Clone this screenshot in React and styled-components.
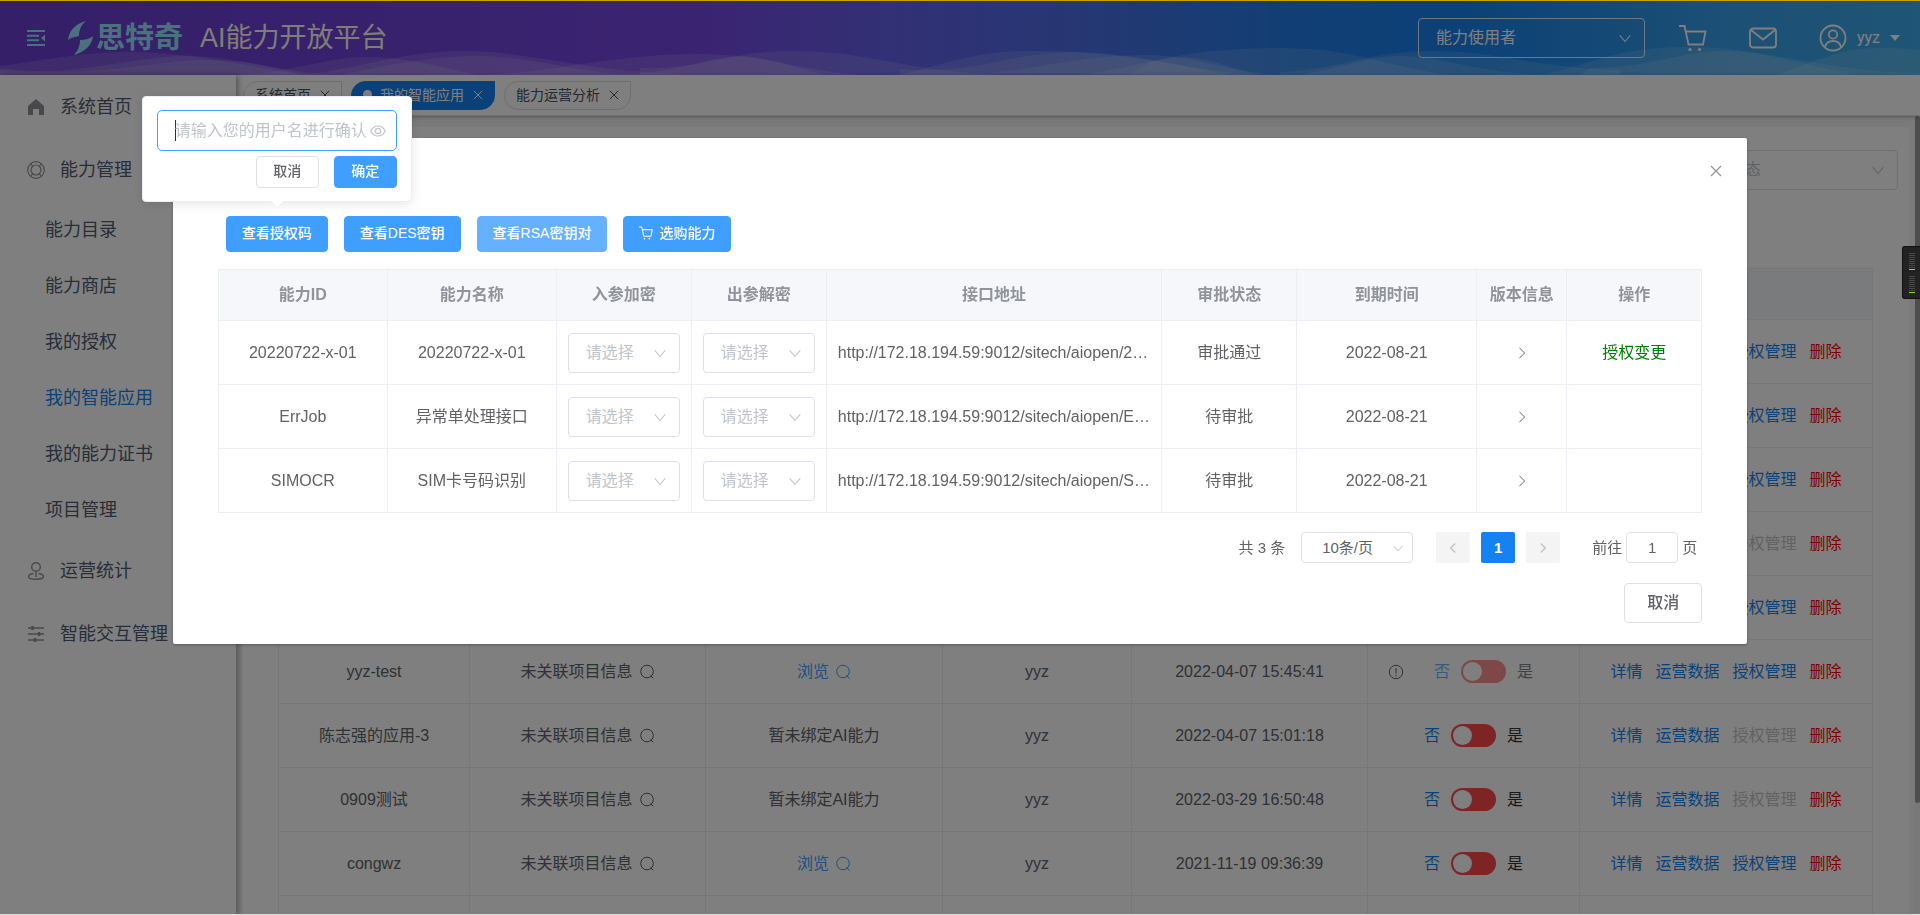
import React from 'react';
import styled, { createGlobalStyle, css } from 'styled-components';

const GlobalStyle = createGlobalStyle`
    * {
        box-sizing: border-box;
    }
    body {
        margin: 0;
        font-family: "Liberation Sans", "Noto Sans CJK SC", sans-serif;
        font-size: 16px;
        line-height: 24px;
        color: #606266;
    }
    button, input, select {
        font-family: inherit;
        line-height: inherit;
        margin: 0;
    }
    svg {
        display: block;
        flex: none;
    }
`

/* ---------- icons ---------- */

const Icon = ({ size = 16, width, height, box = '0 0 16 16', children, stroke = 1 }) => (
    <svg width={width || size} height={height || size} viewBox={box} fill="none" stroke="currentColor" strokeWidth={stroke} aria-hidden="true">
        {children}
    </svg>
)

const ChevronDown = ({ size = 14 }) => (
    <Icon size={size} stroke={1.3}><path d="M2 5l6 7l6-7" /></Icon>
)

const ChevronRight = ({ size = 14, stroke = 1.1 }) => (
    <Icon size={size} stroke={stroke}><path d="M5 2l6 6-6 6" /></Icon>
)

const ChevronLeft = ({ size = 14, stroke }) => (
    <Icon size={size} stroke={stroke}><path d="M11 2L5 8l6 6" /></Icon>
)

const CloseIcon = ({ size = 12 }) => (
    <Icon size={size} box="0 0 12 12" stroke={1.2}><path d="M1 1l10 10M11 1L1 11" /></Icon>
)

const SearchIcon = () => (
    <Icon size={16}><circle cx="8" cy="7.500" r="6.300" /><path d="M11.500 11.500l3 3" /></Icon>
)

const WarnIcon = () => (
    <Icon size={16}><circle cx="8" cy="8" r="6.700" /><path d="M8 4v5.500M8 10.800v1.400" /></Icon>
)

const EyeIcon = () => (
    <Icon size={16} stroke={1.200}>
        <path d="M.7 8C2.500 4.500 5 3 8 3s5.500 1.500 7.300 5c-1.800 3.500-4.300 5-7.300 5S2.500 11.500.7 8z" />
        <circle cx="8" cy="8" r="2.700" />
    </Icon>
)

const FoldIcon = () => (
    <Icon width={18} height={16} box="0 0 18 16" stroke={2}>
        <path d="M0 1h18M0 5.700h12M0 10.300h12M0 15h18" />
        <path d="M18 4.500v7L14 8z" fill="currentColor" stroke="none" />
    </Icon>
)

const CartIcon = ({ size = 28, stroke = 1.800 }) => (
    <Icon size={size} box="0 0 28 28" stroke={stroke}>
        <path d="M0 2h5.500l4 18.500H24L26.500 7.500H6.500" />
        <circle cx="11" cy="25.500" r="1.600" fill="currentColor" stroke="none" />
        <circle cx="20.500" cy="25.500" r="1.600" fill="currentColor" stroke="none" />
    </Icon>
)

const MailIcon = () => (
    <Icon size={28} box="0 0 28 28" stroke={1.800}>
        <rect x="1" y="4.500" width="26" height="19" rx="3" />
        <path d="M2 6l12 9.500L26 6" />
    </Icon>
)

const UserIcon = () => (
    <Icon size={28} box="0 0 28 28" stroke={1.800}>
        <circle cx="14" cy="14" r="12.500" />
        <circle cx="14" cy="10.500" r="4.200" />
        <path d="M6 23c1-4 4-6 8-6s7 2 8 6" />
    </Icon>
)

const LogoMark = () => (
    <svg width="25" height="34" viewBox="0 0 25 34" fill="currentColor" aria-hidden="true">
        <path d="M18 0C9 2 1 9 0 19C4 16 7 16 11 15C11 9 13 4 18 0z" />
        <path d="M25 15C24 24 17 31 6 34C10 29 12 25 12 19C17 19 21 18 25 15z" />
    </svg>
)

const HomeIcon = () => (
    <Icon size={18} box="0 0 18 18">
        <path d="M9 1l8 7v9h-5v-6H6v6H1V8z" fill="currentColor" stroke="none" />
    </Icon>
)

const RingIcon = () => (
    <Icon size={18} box="0 0 18 18" stroke={1.2}>
        <circle cx="9" cy="9" r="8.300" />
        <circle cx="9" cy="9" r="5" />
        <path d="M4 3l2 3M14 3l-2 3M4 15l2-3M14 15l-2-3" />
    </Icon>
)

const StatIcon = () => (
    <Icon size={18} box="0 0 18 18" stroke={1.400}>
        <circle cx="9" cy="5" r="4.300" />
        <path d="M9 9.300V15M6.500 11.500C3.500 12 1.500 13 1.500 14.500S4.500 17.300 9 17.300s7.500-1.300 7.500-2.800-2-2.500-5-3" />
    </Icon>
)

const TuneIcon = () => (
    <Icon size={18} box="0 0 18 18" stroke={1.400}>
        <path d="M1 3h16M1 9h16M1 15h16" />
        <path d="M5.500 1v4M12 7v4M8 13v4" strokeWidth="2.500" />
    </Icon>
)

/* ---------- shell ---------- */

const Shell = styled.div`
    height: 100vh;
    display: flex;
    flex-direction: column;
    overflow: hidden;
    background-color: #fff;
`

const Header = styled.header`
    position: relative;
    flex: none;
    height: 75px;
    display: flex;
    align-items: center;
    padding: 0 20px 0 27px;
    color: #fff;
    background: linear-gradient(90deg, #683ed0 0%, #7647e2 36%, #6660ec 46%, #4a70e6 57%, #247eea 67%, #1682ee 76%, #38a0ea 90%, #3eaaec 100%);
    > * {
        position: relative;
    }
`

const WaveLayer = styled.svg`
    && {
        position: absolute;
        left: 0;
        bottom: 0;
        width: 100%;
        height: 75px;
    }
`

const FoldButton = styled.button`
    border: 0;
    padding: 0;
    background: none;
    color: #94e4fa;
`

const Brand = styled.div`
    display: flex;
    align-items: center;
    gap: 3px;
    margin-left: 23px;
    color: #94e4fa;
    font-size: 29px;
    line-height: 34px;
    font-weight: 700;
`

const Title = styled.h1`
    margin: 0 0 0 17px;
    flex: 1;
    font-size: 27px;
    line-height: 34px;
    font-weight: 400;
    color: #fffaf0;
`

const HeaderActions = styled.div`
    display: flex;
    align-items: center;
    gap: 42px;
    margin-left: 34px;
`

const IconButton = styled.button`
    border: 0;
    padding: 0;
    background: none;
    color: inherit;
`

const UserButton = styled(IconButton)`
    display: flex;
    align-items: center;
    gap: 10px;
    font-family: Roboto, sans-serif;
    font-size: 16px;
`

const Caret = styled.span`
    border: 5px solid transparent;
    border-top: 6px solid currentColor;
    border-bottom: 0;
`

const Body = styled.div`
    flex: 1;
    min-height: 0;
    display: flex;
`

const Sidebar = styled.nav`
    position: relative;
    z-index: 1;
    flex: none;
    width: 236px;
    background-color: #fff;
    box-shadow: 2px 0 6px rgba(0,0,0,0.35);
`

const MenuItem = styled.a`
    display: flex;
    align-items: center;
    gap: 15px;
    height: 63px;
    padding-left: 27px;
    font-size: 18px;
    color: #515a6e;
    text-decoration: none;
    white-space: nowrap;
    svg {
        color: #909399;
    }
`

const SubMenu = styled.div`
    padding: 1px 0;
`

const SubItem = styled(MenuItem)`
    height: 56px;
    padding-left: 45px;
    color: ${props => props.$active ? '#1482f0' : '#515a6e'};
`

const Main = styled.main`
    flex: 1;
    min-width: 0;
    display: flex;
    flex-direction: column;
    background-color: #f4f4f7;
`

const TabsBar = styled.div`
    position: relative;
    flex: none;
    height: 41px;
    display: flex;
    gap: 9px;
    padding: 6px 7px;
    background-color: #fff;
    border-bottom: 1px solid #d8dce5;
    box-shadow: 0 1px 4px rgba(0,0,0,0.3);
`

const Tab = styled.div`
    height: 29px;
    display: flex;
    align-items: center;
    padding: 0 11px 2px;
    font-size: 14px;
    border: 1px solid #d8dce5;
    border-radius: 15px 0 15px 15px;
    color: #495060;
    ${props => props.$active && css`
        color: #fff;
        background-color: #1482f0;
        border-color: #1482f0;
    `}
`

const TabDot = styled.span`
    width: 9px;
    height: 9px;
    margin-right: 8px;
    border-radius: 50%;
    background-color: #fff;
`

const TabClose = styled(IconButton)`
    margin-left: 9px;
`

const Scroller = styled.div`
    flex: 1;
    min-height: 0;
    display: flex;
`

const Content = styled.div`
    flex: 1;
    min-width: 0;
    overflow: hidden;
    padding: 11px 6px;
`

const ScrollTrack = styled.div`
    width: 5px;
    background-color: #f1f1f1;
`

const ScrollThumb = styled.div`
    height: 86%;
    border-radius: 3px;
    background-color: #9a9a9a;
`

const Card = styled.section`
    padding: 23px 11px 23px 12px;
    background-color: #fff;
    border-radius: 4px;
`

const FilterRow = styled.div`
    display: flex;
    justify-content: flex-end;
    margin-bottom: 78px;
`

/* ---------- form parts ---------- */

const SelectBox = styled.div`
    position: relative;
    display: flex;
    align-items: center;
    width: ${props => props.$width || '100%'};
    height: ${props => props.$small ? '31px' : '40px'};
    border: 1px solid ${props => props.$onDark ? 'rgba(255,255,255,0.85)' : '#dcdfe6'};
    border-radius: 4px;
    background-color: ${props => props.$onDark ? 'transparent' : '#fff'};
    color: ${props => props.$onDark ? '#fff' : '#c0c4cc'};
    select {
        width: 100%;
        height: 100%;
        padding: 0 17px;
        border: 0;
        outline: 0;
        appearance: none;
        background: transparent;
        color: ${props => props.$filled ? '#606266' : 'inherit'};
        font-size: ${props => props.$small ? '15px' : '16px'};
        ${props => props.$small && 'padding: 0 20px;'}
    }
    svg {
        position: absolute;
        right: ${props => props.$small ? '8px' : '12px'};
        pointer-events: none;
    }
`

const SelectField = ({ label, value, ...rest }) => (
    <SelectBox {...rest}>
        <select aria-label={label} defaultValue={value}>
            <option value={value}>{value}</option>
        </select>
        <ChevronDown size={rest.$small ? 12 : 14} />
    </SelectBox>
)

const Button = styled.button`
    display: flex;
    align-items: center;
    justify-content: center;
    gap: 6px;
    height: ${props => props.$height || 36}px;
    padding: 0 15px 2px;
    border: 1px solid ${props => props.$primary ? '#409eff' : '#dcdfe6'};
    border-radius: 4px;
    background-color: ${props => props.$primary ? '#409eff' : '#fff'};
    color: ${props => props.$primary ? '#fff' : '#606266'};
    font-size: ${props => props.$large ? 16 : 14}px;
    font-weight: 500;
    white-space: nowrap;
    ${props => props.$large && 'padding: 0 22px;'}
    ${props => props.$hover && css`
        background-color: #66b1ff;
        border-color: #66b1ff;
    `}
`

/* ---------- tables ---------- */

const Table = styled.table`
    width: 100%;
    table-layout: fixed;
    border-collapse: collapse;
    text-align: center;
    th, td {
        border: 1px solid #ebeef5;
        padding: 0 11px;
        white-space: nowrap;
        overflow: hidden;
        text-overflow: ellipsis;
    }
    th {
        height: 51px;
        padding: 0;
        background-color: #f5f7fa;
        color: #909399;
        font-weight: 700;
    }
    td {
        height: 64px;
    }
    td.url {
        padding-right: 9px;
        text-align: left;
    }
`

const AppTableWrap = styled.div`
    margin: 0 25px 0 24px;
`

const CellGroup = styled.div`
    display: flex;
    align-items: center;
    justify-content: center;
    gap: ${props => props.$gap || 6}px;
`

const Link = styled.a`
    text-decoration: none;
    color: ${props => props.$color || '#1482f0'};
`

const SwitchCell = styled.div`
    display: flex;
    align-items: center;
    justify-content: center;
    padding-right: ${props => props.$locked ? 26 : 0}px;
`

const SwitchLabel = styled.label`
    display: flex;
    align-items: center;
    gap: 11px;
    color: #303133;
    opacity: ${props => props.$disabled ? 0.6 : 1};
    span:first-child {
        color: #1482f0;
    }
    input {
        appearance: none;
        width: 45px;
        height: 23px;
        margin: 0;
        padding: 2px;
        border-radius: 12px;
        background-color: #ff4949;
    }
    input::before {
        content: "";
        display: block;
        width: 19px;
        height: 19px;
        border-radius: 50%;
        background-color: #fff;
    }
`

const WarnSlot = styled.span`
    display: flex;
    width: 46px;
`

/* ---------- dialog ---------- */

const Overlay = styled.div`
    position: fixed;
    inset: 0;
    z-index: 10;
    overflow: hidden;
    background-color: rgba(0,0,0,0.5);
    border-top: 1px solid #c9a100;
    border-bottom: 1px solid #dcdcdc;
`

const Dialog = styled.div`
    width: 82%;
    margin: 15vh auto 0;
    background-color: #fff;
    border-radius: 2px;
    box-shadow: 0 1px 3px rgba(0,0,0,0.3);
`

const DialogHeader = styled.div`
    display: flex;
    justify-content: flex-end;
    padding: 22px 20px 34px;
`

const DialogClose = styled(IconButton)`
    display: flex;
    align-items: center;
    justify-content: center;
    width: 22px;
    height: 22px;
    color: #909399;
`

const DialogBody = styled.div`
    padding: 0 45px 21px;
`

const Toolbar = styled.div`
    display: flex;
    gap: 16px;
    margin: 0 8px 17px;
`

const DialogFooter = styled.div`
    display: flex;
    justify-content: flex-end;
    margin-top: 20px;
`

const Pager = styled.div`
    display: flex;
    align-items: center;
    justify-content: flex-end;
    margin-top: 19px;
    padding-right: 5px;
    font-size: 15px;
`

const PageButtons = styled.div`
    display: flex;
    gap: 11px;
    margin: 0 32px 0 23px;
`

const PageButton = styled.button`
    display: flex;
    align-items: center;
    justify-content: center;
    width: 34px;
    height: 31px;
    padding: 0;
    border: 0;
    border-radius: 2px;
    font-size: 15px;
    font-weight: 700;
    background-color: ${props => props.$active ? '#1482f0' : '#f4f4f5'};
    color: ${props => props.$active ? '#fff' : '#c0c4cc'};
`

const Total = styled.span`
    margin-right: 16px;
`

const Jump = styled.label`
    display: flex;
    align-items: center;
    gap: 4px;
    input {
        width: 52px;
        height: 31px;
        border: 1px solid #dcdfe6;
        border-radius: 4px;
        text-align: center;
        font-size: 15px;
        color: #606266;
    }
`

const PopAnchor = styled.div`
    position: relative;
`

const Popover = styled.div`
    position: absolute;
    z-index: 20;
    left: 50%;
    bottom: calc(100% + 14px);
    transform: translateX(-50%);
    width: 270px;
    padding: 13px 14px;
    background-color: #fff;
    border: 1px solid #ebeef5;
    border-radius: 4px;
    box-shadow: 0 2px 12px rgba(0,0,0,0.1);
    &::after {
        content: "";
        position: absolute;
        left: 50%;
        top: 100%;
        margin-left: -6px;
        border: 6px solid transparent;
        border-top-color: #fff;
        border-bottom: 0;
    }
`

const ConfirmField = styled.div`
    display: flex;
    align-items: center;
    height: 41px;
    padding: 0 10px 0 17px;
    border: 1px solid #409eff;
    border-radius: 5px;
    color: #c0c4cc;
    input {
        flex: 1;
        min-width: 0;
        padding: 0;
        margin-right: 3px;
        border: 0;
        outline: 0;
        background: transparent;
        font-size: 16px;
        color: #606266;
    }
    input::placeholder {
        color: #c0c4cc;
    }
`

const TextCursor = styled.span`
    width: 1px;
    height: 21px;
    margin-right: -1px;
    background-color: #303133;
`

const PopActions = styled.div`
    display: flex;
    justify-content: flex-end;
    gap: 15px;
    margin-top: 5px;
    button {
        width: 63px;
    }
`

/* floating level meter on the right edge of the window */
const Meter = styled.div`
    position: fixed;
    right: 0;
    top: 246px;
    z-index: 30;
    display: flex;
    flex-direction: column;
    justify-content: center;
    gap: 6px;
    width: 18px;
    height: 53px;
    padding-left: 6px;
    background-color: #222;
    border: 1px solid #111;
    border-right: 0;
    border-radius: 3px 0 0 3px;
`

const MeterBars = styled.div`
    width: 6px;
    height: 17px;
    background: repeating-linear-gradient(#484848 0 1px, transparent 1px 2px);
    border-bottom: 1px solid ${props => props.$color};
`

/* ---------- data ---------- */

const waves = [
    'M0 66C40 61 80 52 130 52C190 52 240 66 310 75H0z',
    'M0 70C70 76 110 62 175 56C225 54 260 68 330 75H0z',
    'M0 68C50 74 100 72 140 66C190 58 240 55 300 75H0z',
    'M245 75C300 70 330 57 365 57C410 57 440 68 481 75z',
    'M300 75C350 71 400 51 465 51C530 51 580 72 700 75z',
    'M340 75C400 62 440 56 480 56C540 57 580 74 640 75z',
    'M480 75C560 72 610 54 700 54C760 54 800 70 860 75z',
    'M600 75C670 76 710 56 742 56C775 58 800 70 827 75z',
    'M640 68C700 70 730 51 790 51C870 51 900 70 1000 75H640z',
    'M900 75C940 66 970 51 1035 51C1120 51 1170 64 1230 75z',
    'M900 69C970 76 1010 53 1070 52C1140 52 1180 70 1260 75H900z',
    'M990 73C1040 69 1080 55 1150 55C1200 56 1230 75 1300 75z',
    'M1080 75C1130 68 1160 57 1185 57C1215 59 1235 70 1260 75z',
    'M1150 62C1190 52 1230 48 1285 48C1360 49 1390 68 1450 75H1130z',
    'M1280 72C1340 70 1370 51 1430 51C1500 51 1540 69 1620 70V75H1280z',
    'M1300 75C1350 66 1370 56 1400 56C1450 57 1480 75 1560 75z',
    'M1540 75C1590 66 1610 47 1690 47C1760 47 1800 66 1860 75z',
    'M1590 68C1650 68 1680 51 1725 51C1790 53 1830 72 1920 73V75H1580z',
    'M1775 75C1810 66 1830 48 1880 48C1900 48 1910 49 1920 50V75z',
]

const subMenu = ['能力目录', '能力商店', '我的授权', '我的智能应用', '我的能力证书', '项目管理']

const apps = [
    { id: 1, grant: true },
    { id: 2, grant: true },
    { id: 3, grant: true },
    { id: 4, grant: false },
    { id: 5, grant: true },
    { id: 6, name: 'yyz-test', bound: true, time: '2022-04-07 15:45:41', grant: true, locked: true },
    { id: 7, name: '陈志强的应用-3', bound: false, time: '2022-04-07 15:01:18', grant: false },
    { id: 8, name: '0909测试', bound: false, time: '2022-03-29 16:50:48', grant: false },
    { id: 9, name: 'congwz', bound: true, time: '2021-11-19 09:36:39', grant: true },
    { id: 10 },
]

const abilities = [
    { id: '20220722-x-01', name: '20220722-x-01', status: '审批通过', change: true },
    { id: 'ErrJob', name: '异常单处理接口', status: '待审批' },
    { id: 'SIMOCR', name: 'SIM卡号码识别', status: '待审批' },
]

const abilityHeads = ['能力ID', '能力名称', '入参加密', '出参解密', '接口地址', '审批状态', '到期时间', '版本信息', '操作']
const abilityCols = [169, 169, 135, 135, undefined, 135, 180, 90, 135]
const appCols = [191, 236, 237, 189, 236, 212, undefined]

/* ---------- parts ---------- */

const Cols = ({ widths }) => (
    <colgroup>
        {widths.map((width, index) => <col key={index} width={width} />)}
    </colgroup>
)

const TopBar = () => {
    return (
        <Header>
            <WaveLayer viewBox="0 0 1920 75" preserveAspectRatio="none" aria-hidden="true">
                {waves.map(d => <path key={d} d={d} fill="#fff" fillOpacity="0.13" />)}
            </WaveLayer>
            <FoldButton aria-label="收起菜单"><FoldIcon /></FoldButton>
            <Brand><LogoMark />思特奇</Brand>
            <Title>AI能力开放平台</Title>
            <SelectField label="角色" value="能力使用者" $width="227px" $onDark />
            <HeaderActions>
                <IconButton aria-label="购物车"><CartIcon /></IconButton>
                <IconButton aria-label="消息"><MailIcon /></IconButton>
                <UserButton><UserIcon />yyz<Caret /></UserButton>
            </HeaderActions>
        </Header>
    )
}

const SideMenu = () => {
    return (
        <Sidebar>
            <MenuItem href="#home"><HomeIcon />系统首页</MenuItem>
            <MenuItem href="#ability"><RingIcon />能力管理</MenuItem>
            <SubMenu>
                {subMenu.map(name => (
                    <SubItem key={name} href="#sub" $active={name === '我的智能应用'}>{name}</SubItem>
                ))}
            </SubMenu>
            <MenuItem href="#stat"><StatIcon />运营统计</MenuItem>
            <MenuItem href="#chat"><TuneIcon />智能交互管理</MenuItem>
        </Sidebar>
    )
}

const PageTab = ({ name, active }) => (
    <Tab $active={active}>
        {active && <TabDot />}
        {name}
        <TabClose aria-label="关闭"><CloseIcon size={10} /></TabClose>
    </Tab>
)

const AppRow = ({ app }) => {
    return (
        <tr>
            <td>{app.name}</td>
            <td>{app.name && <CellGroup>未关联项目信息<SearchIcon /></CellGroup>}</td>
            <td>
                {app.bound && (
                    <Link href="#view" $color="#409eff">
                        <CellGroup>浏览<SearchIcon /></CellGroup>
                    </Link>
                )}
                {app.bound === false && '暂未绑定AI能力'}
            </td>
            <td>{app.name && 'yyz'}</td>
            <td>{app.time}</td>
            <td>
                {app.name && (
                    <SwitchCell $locked={app.locked}>
                        {app.locked && <WarnSlot><WarnIcon /></WarnSlot>}
                        <SwitchLabel $disabled={app.locked}>
                            <span>否</span>
                            <input type="checkbox" role="switch" disabled={app.locked} />
                            <span>是</span>
                        </SwitchLabel>
                    </SwitchCell>
                )}
            </td>
            <td>
                {'grant' in app && (
                    <CellGroup $gap={13}>
                        <Link href="#detail">详情</Link>
                        <Link href="#data">运营数据</Link>
                        <Link href="#grant" $color={app.grant ? '#1482f0' : '#c0c4cc'}>授权管理</Link>
                        <Link href="#del" $color="#f00">删除</Link>
                    </CellGroup>
                )}
            </td>
        </tr>
    )
}

const AppsPage = () => {
    return (
        <Card>
            <FilterRow>
                <SelectField label="状态" value="状态" $width="187px" />
            </FilterRow>
            <AppTableWrap>
                <Table>
                    <Cols widths={appCols} />
                    <thead>
                        <tr>{appCols.map((col, index) => <th key={index} />)}</tr>
                    </thead>
                    <tbody>
                        {apps.map(app => <AppRow key={app.id} app={app} />)}
                    </tbody>
                </Table>
            </AppTableWrap>
        </Card>
    )
}

const ConfirmPopover = () => {
    return (
        <Popover>
            <ConfirmField>
                <TextCursor />
                <input aria-label="用户名" placeholder="请输入您的用户名进行确认" />
                <EyeIcon />
            </ConfirmField>
            <PopActions>
                <Button $height={32}>取消</Button>
                <Button $height={32} $primary>确定</Button>
            </PopActions>
        </Popover>
    )
}

const AbilityTable = () => {
    return (
        <Table>
            <Cols widths={abilityCols} />
            <thead>
                <tr>{abilityHeads.map(head => <th key={head}>{head}</th>)}</tr>
            </thead>
            <tbody>
                {abilities.map(item => (
                    <tr key={item.id}>
                        <td>{item.id}</td>
                        <td>{item.name}</td>
                        <td><SelectField label="入参加密" value="请选择" /></td>
                        <td><SelectField label="出参解密" value="请选择" /></td>
                        <td className="url">http://172.18.194.59:9012/sitech/aiopen/{item.id}</td>
                        <td>{item.status}</td>
                        <td>2022-08-21</td>
                        <td><CellGroup><ChevronRight /></CellGroup></td>
                        <td>{item.change && <Link href="#change" $color="#008000">授权变更</Link>}</td>
                    </tr>
                ))}
            </tbody>
        </Table>
    )
}

const AbilityDialog = () => {
    return (
        <Overlay>
            <Dialog role="dialog">
                <DialogHeader>
                    <DialogClose aria-label="关闭"><CloseIcon /></DialogClose>
                </DialogHeader>
                <DialogBody>
                    <Toolbar>
                        <PopAnchor>
                            <Button $primary>查看授权码</Button>
                            <ConfirmPopover />
                        </PopAnchor>
                        <Button $primary>查看DES密钥</Button>
                        <Button $primary $hover>查看RSA密钥对</Button>
                        <Button $primary><CartIcon size={14} stroke={2} />选购能力</Button>
                    </Toolbar>
                    <AbilityTable />
                    <Pager>
                        <Total>共 3 条</Total>
                        <SelectField label="每页条数" value="10条/页" $width="112px" $small $filled />
                        <PageButtons>
                            <PageButton aria-label="上一页"><ChevronLeft size={12} stroke={2} /></PageButton>
                            <PageButton $active>1</PageButton>
                            <PageButton aria-label="下一页"><ChevronRight size={12} stroke={2} /></PageButton>
                        </PageButtons>
                        <Jump>前往<input defaultValue="1" />页</Jump>
                    </Pager>
                    <DialogFooter>
                        <Button $height={40} $large>取消</Button>
                    </DialogFooter>
                </DialogBody>
            </Dialog>
        </Overlay>
    )
}

const App = () => {
    return (
        <>
            <GlobalStyle />
            <Shell>
                <TopBar />
                <Body>
                    <SideMenu />
                    <Main>
                        <TabsBar>
                            <PageTab name="系统首页" />
                            <PageTab name="我的智能应用" active />
                            <PageTab name="能力运营分析" />
                        </TabsBar>
                        <Scroller>
                            <Content><AppsPage /></Content>
                            <ScrollTrack><ScrollThumb /></ScrollTrack>
                        </Scroller>
                    </Main>
                </Body>
            </Shell>
            <AbilityDialog />
            <Meter>
                <MeterBars $color="#f5a623" />
                <MeterBars $color="#7ed321" />
            </Meter>
        </>
    )
}

export default App;
